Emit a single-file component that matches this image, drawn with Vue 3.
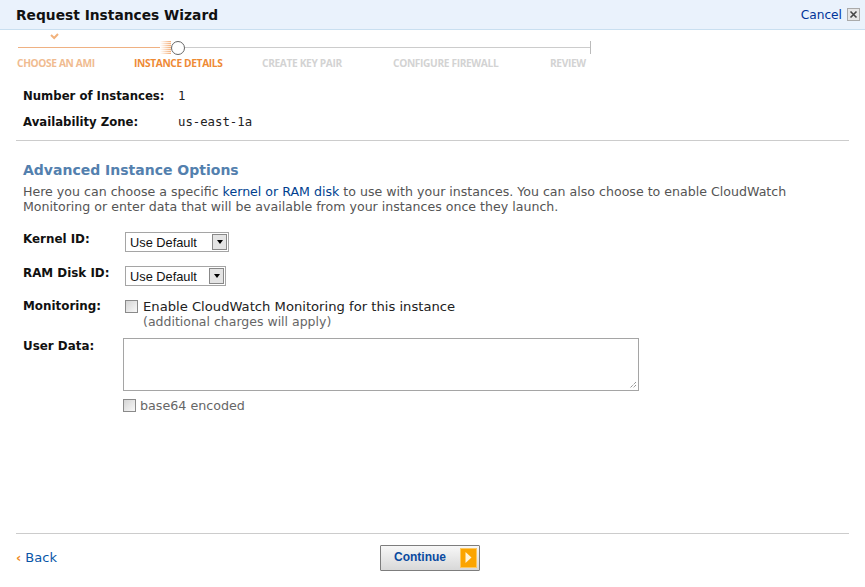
<script setup>
const steps = [
  { label: 'CHOOSE AN AMI', cls: 'done', width: 117 },
  { label: 'INSTANCE DETAILS', cls: 'active', width: 128 },
  { label: 'CREATE KEY PAIR', cls: '', width: 131 },
  { label: 'CONFIGURE FIREWALL', cls: '', width: 157 },
  { label: 'REVIEW', cls: '', width: 40 }
]
</script>

<template>
  <div class="page">
    <header class="top">
      <h1 class="title">Request Instances Wizard</h1>
      <div class="cancel">
        <a class="cancel-link">Cancel</a>
        <span class="close">
          <svg width="9" height="9" viewBox="0 0 9 9"><path d="M1.5 1.5l6 6M7.5 1.5l-6 6" stroke="#444" stroke-width="1.6" fill="none"/></svg>
        </span>
      </div>
    </header>

    <section class="wizard">
      <div class="check-row">
        <svg class="check" width="9" height="7" viewBox="0 0 9 7"><path d="M1 2l3.2 3L8 1" stroke="#f2b27c" stroke-width="2" fill="none"/></svg>
      </div>
      <div class="track">
        <div class="seg seg-done"></div>
        <div class="fade"></div>
        <div class="knob"></div>
        <div class="seg seg-todo"></div>
        <div class="end"></div>
      </div>
      <div class="labels">
        <span v-for="s in steps" :key="s.label" class="step" :class="s.cls" :style="{ width: s.width + 'px' }">{{ s.label }}</span>
      </div>
    </section>

    <section class="summary">
      <div class="sum-row"><b class="sum-label">Number of Instances:</b><span class="mono">1</span></div>
      <div class="sum-row second"><b class="sum-label">Availability Zone:</b><span class="mono">us-east-1a</span></div>
    </section>

    <hr class="rule rule-a" />

    <section class="advanced">
      <h2 class="heading">Advanced Instance Options</h2>
      <p class="intro">Here you can choose a specific <a class="link">kernel or RAM disk</a> to use with your instances. You can also choose to enable CloudWatch Monitoring or enter data that will be available from your instances once they launch.</p>

      <div class="form">
        <div class="field f-kernel">
          <b class="flabel">Kernel ID:</b>
          <div class="select s-wide"><span class="sel-text">Use Default</span><span class="arrow"><i></i></span></div>
        </div>
        <div class="field f-ram">
          <b class="flabel">RAM Disk ID:</b>
          <div class="select s-narrow"><span class="sel-text">Use Default</span><span class="arrow"><i></i></span></div>
        </div>
        <div class="field f-mon">
          <b class="flabel">Monitoring:</b>
          <div class="mon">
            <div class="chk-line"><span class="box"></span><span class="mon-text">Enable CloudWatch Monitoring for this instance</span></div>
            <div class="note">(additional charges will apply)</div>
          </div>
        </div>
        <div class="field f-user">
          <b class="flabel">User Data:</b>
          <div>
            <div class="textarea">
              <svg class="grip" width="8" height="8" viewBox="0 0 8 8"><path d="M7 1L1 7M7 4L4 7" stroke="#666" stroke-width="1" stroke-dasharray="1 1" fill="none"/></svg>
            </div>
            <div class="b64"><span class="box"></span><span class="b64-text">base64 encoded</span></div>
          </div>
        </div>
      </div>
    </section>

    <div class="spacer"></div>

    <hr class="rule rule-b" />

    <footer class="foot">
      <div class="back"><span class="chev">‹</span><a class="back-link">Back</a></div>
      <div class="continue">
        <span class="cont-text">Continue</span>
        <span class="cont-icon"><svg width="7" height="11" viewBox="0 0 7 11"><path d="M0.5 0l6 5.5-6 5.5z" fill="#fff3d8"/></svg></span>
      </div>
    </footer>
  </div>
</template>

<style scoped>
.page {
  width: 865px;
  height: 587px;
  display: flex;
  flex-direction: column;
  background: #fff;
  font-family: "DejaVu Sans", Verdana, sans-serif;
  font-size: 13px;
  color: #000;
  overflow: hidden;
}
.top {
  height: 29px;
  flex: none;
  box-sizing: content-box;
  background: #eaf2fc;
  border-bottom: 1px solid #c9dff0;
  display: flex;
  align-items: center;
  justify-content: space-between;
  padding: 0 5px 0 16px;
}
.title {
  margin: 0;
  font-size: 13.8px;
  font-weight: bold;
  color: #111;
  font-family: "DejaVu Sans", sans-serif;
}
.cancel { display: flex; align-items: center; gap: 5px; }
.cancel-link { color: #003399; font-size: 12.2px; }
.close {
  width: 11px;
  height: 11px;
  border: 1px solid #aaa;
  background: #e6e6e6;
  display: flex;
  align-items: center;
  justify-content: center;
}
.wizard { padding: 3px 0 0 18px; height: 47px; flex: none; box-sizing: content-box; }
.check-row { height: 6px; padding-left: 32px; }
.check { display: block; }
.track { display: flex; align-items: center; width: 573px; height: 17px; }
.seg { height: 1px; }
.seg-done { width: 142px; background: #efb182; }
.fade {
  width: 11px;
  height: 13px;
  background: repeating-linear-gradient(to bottom, rgba(240,150,80,.8) 0 1px, rgba(240,150,80,.2) 1px 2px);
  -webkit-mask-image: linear-gradient(to right, transparent, #000);
  mask-image: linear-gradient(to right, transparent, #000);
}
.knob {
  width: 12px;
  height: 12px;
  border: 1.5px solid #666;
  border-radius: 50%;
  background: #fff;
  flex: none;
}
.seg-todo { flex: 1; background: #ccc; }
.end { width: 1px; height: 13px; background: #bbb; }
.labels { display: flex; margin-left: -1px; }
.step {
  font-family: "Open Sans", sans-serif;
  font-weight: 700;
  font-size: 10.2px;
  letter-spacing: -0.36px;
  line-height: 14px;
  white-space: nowrap;
  color: #d3d3d3;
}
.step.done { color: #f0bb90; }
.step.active { color: #ee8a35; }
.summary { padding: 8px 0 0 23px; height: 60px; box-sizing: border-box; flex: none; }
.sum-row { display: flex; align-items: baseline; height: 16px; line-height: 16px; }
.second { margin-top: 10px; }
.sum-label { width: 155px; flex: none; white-space: nowrap; font-size: 11.7px; font-weight: bold; color: #111; }
.mono { font-family: "DejaVu Sans Mono", monospace; font-size: 12.3px; color: #222; }
.rule { margin: 0; border: none; height: 1px; background: #ccc; flex: none; }
.rule-a { margin: 0 16px; }
.advanced { padding: 20px 0 0 23px; flex: none; }
.heading { margin: 0; font-size: 14px; font-weight: bold; color: #5380ae; line-height: 18px; }
.intro {
  margin: 5px 0 0;
  width: 800px;
  font-size: 12.6px;
  line-height: 15px;
  color: #555;
}
.link { color: #003f8f; }
.form { margin-top: 17px; }
.field { display: flex; align-items: flex-start; }
.flabel { width: 102px; flex: none; font-size: 11.9px; font-weight: bold; line-height: 16px; color: #111; }
.f-ram { margin-top: 13px; }
.f-mon { margin-top: 12px; }
.f-user { margin-top: 9px; }
.select {
  height: 18px;
  border: 1px solid #a5a5a5;
  display: flex;
  align-items: center;
  justify-content: space-between;
  padding: 0 0 0 4px;
  margin-top: 1px;
  font-family: "Liberation Sans", Arial, sans-serif;
  font-size: 12.8px;
  color: #111;
  background: #fff;
}
.s-wide { width: 98px; }
.s-narrow { width: 95px; }
.arrow {
  width: 15px;
  height: 16px;
  margin-right: 1px;
  background: #e4e4e4;
  border: 1px solid #888;
  box-sizing: border-box;
  display: flex;
  align-items: center;
  justify-content: center;
}
.arrow i {
  width: 0;
  height: 0;
  border-left: 3.5px solid transparent;
  border-right: 3.5px solid transparent;
  border-top: 4px solid #000;
}
.chk-line { display: flex; align-items: center; height: 16px; }
.box {
  width: 11px;
  height: 11px;
  flex: none;
  border: 1px solid #8a8a8a;
  background: linear-gradient(135deg, #d4d4d4, #f8f8f8);
}
.mon-text { margin-left: 5px; font-size: 13.15px; color: #222; }
.note { margin-left: 18px; font-size: 12.5px; color: #666; line-height: 15px; }
.textarea {
  width: 514px;
  height: 51px;
  border: 1px solid #a5a5a5;
  position: relative;
  margin-left: -2px;
}
.grip { position: absolute; right: 1px; bottom: 1px; }
.b64 { display: flex; align-items: center; height: 16px; margin-top: 6px; margin-left: -2px; }
.b64-text { margin-left: 4px; font-size: 12.7px; color: #666; }
.spacer { flex: 1; }
.rule-b { margin: 0 16px; }
.foot {
  height: 53px;
  flex: none;
  display: flex;
  align-items: center;
  padding: 0 0 6px 16px;
  box-sizing: border-box;
}
.back { display: flex; align-items: center; gap: 4px; width: 364px; }
.chev { color: #f08a24; font-size: 13px; font-weight: bold; }
.back-link { color: #0a56a8; font-size: 13px; }
.continue {
  width: 83px;
  height: 24px;
  border: 1px solid #7d7d7d;
  border-radius: 1px;
  background: linear-gradient(to bottom, #f7f7f7, #d8d8d8);
  display: flex;
  align-items: center;
  justify-content: space-between;
  padding: 0 2px 0 13px;
  box-sizing: content-box;
}
.cont-text { font-family: "Liberation Sans", Arial, sans-serif; font-size: 12px; font-weight: bold; color: #0a4aa0; padding-bottom: 2px; }
.cont-icon {
  width: 15px;
  height: 18px;
  background: #fba400;
  border: 1px solid #fcc860;
  display: flex;
  align-items: center;
  justify-content: center;
}
</style>

<style>
html, body { margin: 0; background: #fff; }
</style>
